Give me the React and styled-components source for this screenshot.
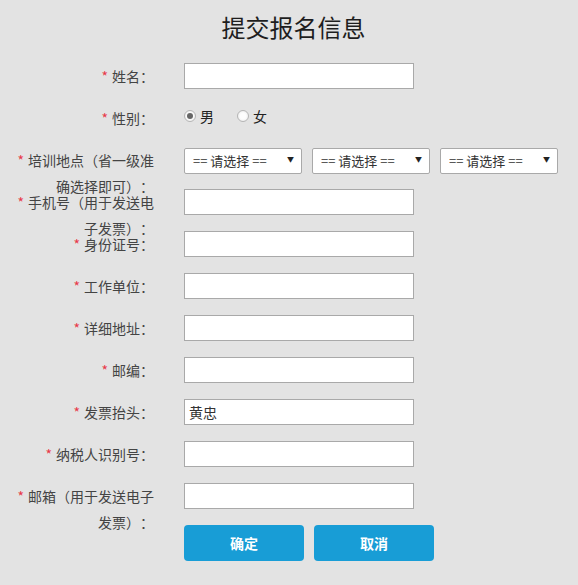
import styled, { createGlobalStyle } from 'styled-components';

const GlobalStyle = createGlobalStyle`
  html, body {
    margin: 0;
    padding: 0;
    background: #e3e3e3;
    font-family: "Noto Sans CJK SC", "Liberation Sans", sans-serif;
    text-spacing-trim: space-all;
  }
`;

const Page = styled.div`
  min-height: 585px;
  background: #e3e3e3;
  padding-top: 10px;
  box-sizing: border-box;
`;

const Title = styled.h1`
  margin: 0 0 19px;
  font-size: 24px;
  line-height: 34px;
  font-weight: normal;
  color: #1e1e1e;
  text-align: center;
  padding-left: 9px;
`;

const Form = styled.form`
  display: flex;
  flex-direction: column;
  gap: 16px;
  margin: 0;
`;

const Row = styled.div`
  display: flex;
  height: ${p => p.tall ? 36 : 26}px;
  align-items: flex-start;
`;

const Label = styled.label`
  flex: 0 0 144px;
  margin-left: 10px;
  margin-right: 30px;
  text-align: right;
  font-size: 14px;
  line-height: 26px;
  color: #444;
  word-break: break-all;
`;

const Star = styled.span`
  color: #e8394a;
  margin-right: 4px;
`;

const TextInput = styled.input`
  box-sizing: border-box;
  width: 230px;
  height: 26px;
  margin: 0;
  padding: 0 4px;
  border: 1px solid #a9a9a9;
  background: #fff;
  font-family: inherit;
  font-size: 14px;
  color: #333;
  outline: none;
`;

const RadioGroup = styled.div`
  display: flex;
  align-items: center;
  height: 22px;
  gap: 23px;
`;

const RadioItem = styled.label`
  display: flex;
  align-items: center;
  font-size: 14px;
  color: #222;
  gap: 4px;
`;

const Radio = styled.input`
  appearance: none;
  margin: 0;
  width: 12px;
  height: 12px;
  border-radius: 50%;
  border: 1px solid #b5b5b5;
  background: radial-gradient(circle, #fdfdfd 40%, #e6e6e6 100%);
  box-sizing: border-box;
  position: relative;
  &:checked::after {
    content: '';
    position: absolute;
    left: 2px;
    top: 2px;
    width: 6px;
    height: 6px;
    border-radius: 50%;
    background: #666;
  }
`;

const Selects = styled.div`
  display: flex;
  gap: 10px;
`;

const SelectBox = styled.div`
  position: relative;
  width: 118px;
  height: 26px;
  &::after {
    content: '▼';
    position: absolute;
    right: 8px;
    top: 8px;
    font-size: 7px;
    line-height: 8px;
    color: #222;
    pointer-events: none;
  }
`;

const Select = styled.select`
  appearance: none;
  box-sizing: border-box;
  width: 100%;
  height: 100%;
  margin: 0;
  padding: 0 0 0 8px;
  border: 1px solid #a9a9a9;
  border-radius: 2px;
  background: #fff;
  font-family: inherit;
  font-size: 13px;
  color: #333;
  outline: none;
`;

const Buttons = styled.div`
  display: flex;
  gap: 10px;
`;

const Button = styled.button`
  width: 120px;
  height: 36px;
  border: none;
  border-radius: 4px;
  background: #189dd6;
  color: #fff;
  font-family: inherit;
  font-size: 14px;
  font-weight: bold;
  cursor: pointer;
`;

const fields = [
  { label: '姓名：' },
  { label: '性别：', type: 'radio' },
  { label: '培训地点（省一级准确选择即可）：', type: 'select' },
  { label: '手机号（用于发送电子发票）：' },
  { label: '身份证号：' },
  { label: '工作单位：' },
  { label: '详细地址：' },
  { label: '邮编：' },
  { label: '发票抬头：', value: '黄忠' },
  { label: '纳税人识别号：' },
  { label: '邮箱（用于发送电子发票）：' },
];

const Control = ({ field }) => {
  if (field.type === 'radio') {
    return (
      <RadioGroup>
        <RadioItem><Radio type="radio" name="sex" defaultChecked />男</RadioItem>
        <RadioItem><Radio type="radio" name="sex" />女</RadioItem>
      </RadioGroup>
    );
  }
  if (field.type === 'select') {
    return (
      <Selects>
        {[0, 1, 2].map(i => (
          <SelectBox key={i}>
            <Select defaultValue="">
              <option value="">== 请选择 ==</option>
            </Select>
          </SelectBox>
        ))}
      </Selects>
    );
  }
  return <TextInput type="text" defaultValue={field.value || ''} />;
};

export default function App() {
  return (
    <Page>
      <GlobalStyle />
      <Title>提交报名信息</Title>
      <Form onSubmit={e => e.preventDefault()}>
        {fields.map(f => (
          <Row key={f.label}>
            <Label><Star>*</Star>{f.label}</Label>
            <Control field={f} />
          </Row>
        ))}
        <Row tall>
          <Label />
          <Buttons>
            <Button type="submit">确定</Button>
            <Button type="button">取消</Button>
          </Buttons>
        </Row>
      </Form>
    </Page>
  );
}
